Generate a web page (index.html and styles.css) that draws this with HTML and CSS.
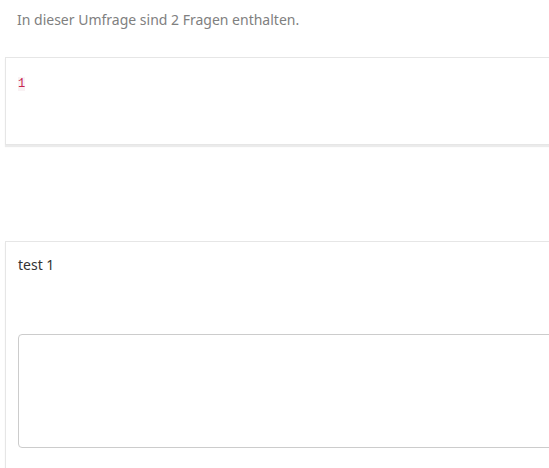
FILE: index.html
```html
<!DOCTYPE html>
<html lang="de">
<head>
<meta charset="utf-8">
<title>Umfrage</title>
<link rel="stylesheet" href="styles.css">
</head>
<body>
<div class="page">
  <p class="intro">In dieser Umfrage sind 2 Fragen enthalten.</p>
  <div class="panel panel-desc">
    <div class="desc"><code>1</code></div>
  </div>
  <div class="panel panel-question">
    <div class="question-title">test 1</div>
    <textarea class="answer"></textarea>
  </div>
</div>
</body>
</html>
```
FILE: styles.css
```css
html, body {
  margin: 0;
  padding: 0;
  background: #fff;
  overflow: hidden;
}
body {
  font-family: "Noto Sans", "Open Sans", sans-serif;
  font-size: 14px;
  line-height: 20px;
  color: #333;
}
.page {
  width: 620px;
  padding-left: 5px;
}
.intro {
  margin: 0;
  padding: 10px 0 0 12px;
  height: 57px;
  box-sizing: border-box;
  color: #808080;
}
.panel {
  background: #fff;
  border: 1px solid #e6e6e6;
  box-shadow: 0 2px 1px rgba(0, 0, 0, 0.08);
}
.panel-desc {
  padding: 14px 12px 50px 12px;
  margin-bottom: 96px;
}
.desc code {
  font-family: "Liberation Mono", "DejaVu Sans Mono", monospace;
  font-size: 12px;
  color: #c7254e;
  background: #f9f2f4;
  padding: 0;
}
.panel-question {
  padding: 13px 12px 40px 12px;
}
.question-title {
  height: 79px;
}
.answer {
  display: block;
  box-sizing: border-box;
  width: 100%;
  height: 114px;
  margin: 0;
  border: 1px solid #cccccc;
  border-radius: 4px;
  resize: none;
  background: #fff;
}
```
